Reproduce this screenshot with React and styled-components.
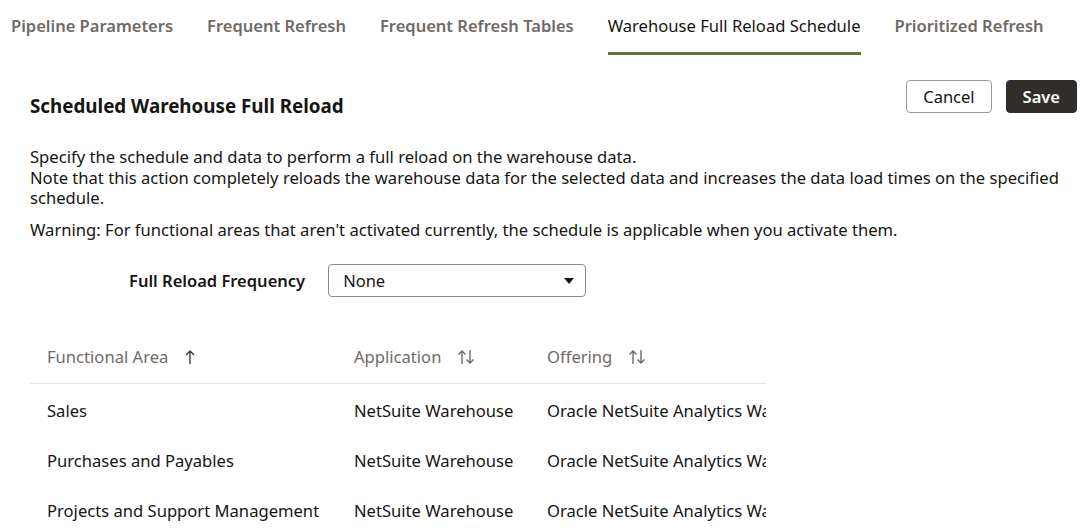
import React from "react";
import styled, { createGlobalStyle } from "styled-components";

const Global = createGlobalStyle`
  html, body { margin: 0; padding: 0; background: #fff; }
  body { font-family: "Noto Sans", "Open Sans", sans-serif; color: #161513; }
  * { box-sizing: border-box; }
`;

const Page = styled.div`
  width: 1083px;
  height: 531px;
  overflow: hidden;
  background: #fff;
`;

const TabBar = styled.div`
  display: flex;
  gap: 34px;
  padding-left: 11px;
  height: 55px;
`;

const Tab = styled.div`
  font-size: ${p => (p.$active ? 16.6 : 16.5)}px;
  font-weight: ${p => (p.$active ? 400 : 600)};
  color: ${p => (p.$active ? "#161513" : "#6f6a66")};
  padding-top: 14px;
  height: 55px;
  border-bottom: 3px solid ${p => (p.$active ? "#5b7443" : "transparent")};
  white-space: nowrap;
`;

const Content = styled.div`
  padding: 0 6px 0 30px;
`;

const HeaderRow = styled.div`
  display: flex;
  justify-content: space-between;
  align-items: flex-start;
  margin-top: 25px;
`;

const Title = styled.h2`
  margin: 13px 0 0;
  font-size: 18.8px;
  font-weight: 700;
  color: #161513;
`;

const Actions = styled.div`
  display: flex;
  gap: 14px;
`;

const Button = styled.button`
  font-family: inherit;
  font-size: 16.5px;
  height: 33px;
  padding: 0 16px;
  border-radius: 4px;
  border: 1px solid ${p => (p.$primary ? "#312d2a" : "#9e9892")};
  background: ${p => (p.$primary ? "#312d2a" : "#fff")};
  color: ${p => (p.$primary ? "#fff" : "#161513")};
  font-weight: ${p => (p.$primary ? 600 : 400)};
`;

const Para = styled.p`
  margin: ${p => p.$mt || 0}px 0 0;
  font-size: 16.6px;
  line-height: 20.5px;
  color: #161513;
`;

const FieldRow = styled.div`
  display: flex;
  align-items: center;
  margin-top: 24px;
  padding-left: 99px;
  gap: 23px;
`;

const Label = styled.label`
  font-size: 16.5px;
  font-weight: 600;
  color: #161513;
`;

const Select = styled.div`
  width: 258px;
  height: 33px;
  border: 1px solid #8f8a85;
  border-radius: 4px;
  display: flex;
  align-items: center;
  justify-content: space-between;
  padding: 0 10px 0 14px;
  font-size: 16.5px;
`;

const Table = styled.div`
  margin-top: 33px;
  width: 736px;
  overflow: hidden;
`;

const Grid = styled.div`
  display: grid;
  grid-template-columns: 307px 193px 300px;
  align-items: center;
  height: ${p => (p.$head ? 54 : 50)}px;
  border-bottom: ${p => (p.$head ? "1px solid #e4e2e0" : "none")};
  white-space: nowrap;
`;

const Body = styled.div`
  padding-top: 1px;
`;

const HeadCell = styled.div`
  padding-left: 17px;
  font-size: 16.6px;
  color: #6f6a66;
  display: flex;
  align-items: center;
  gap: 16px;
`;

const Cell = styled.div`
  padding-left: 17px;
  font-size: 16.6px;
  color: #161513;
`;

const Caret = () => (
  <svg width="12" height="8" viewBox="0 0 12 8"><path d="M1 1h10L6 7z" fill="#161513" /></svg>
);

const Up = () => (
  <svg width="12" height="16" viewBox="0 0 12 16" fill="none" stroke="#3d3935" strokeWidth="1.4">
    <path d="M6 15V2M2 6l4-4 4 4" />
  </svg>
);

const Both = () => (
  <svg width="18" height="16" viewBox="0 0 18 16" fill="none" stroke="#6f6a66" strokeWidth="1.4">
    <path d="M5 15V2M1.5 5.5L5 2l3.5 3.5M13 1v13M9.5 10.5L13 14l3.5-3.5" />
  </svg>
);

const rows = ["Sales", "Purchases and Payables", "Projects and Support Management"];

export default function App() {
  return (
    <Page>
      <Global />
      <TabBar>
        <Tab>Pipeline Parameters</Tab>
        <Tab>Frequent Refresh</Tab>
        <Tab>Frequent Refresh Tables</Tab>
        <Tab $active>Warehouse Full Reload Schedule</Tab>
        <Tab>Prioritized Refresh</Tab>
      </TabBar>
      <Content>
        <HeaderRow>
          <Title>Scheduled Warehouse Full Reload</Title>
          <Actions>
            <Button>Cancel</Button>
            <Button $primary>Save</Button>
          </Actions>
        </HeaderRow>
        <Para $mt={28}>
          Specify the schedule and data to perform a full reload on the warehouse data.
          <br />
          Note that this action completely reloads the warehouse data for the selected data and increases the data load times on the specified schedule.
        </Para>
        <Para $mt={11}>
          Warning: For functional areas that aren't activated currently, the schedule is applicable when you activate them.
        </Para>
        <FieldRow>
          <Label>Full Reload Frequency</Label>
          <Select>
            None
            <Caret />
          </Select>
        </FieldRow>
        <Table>
          <Grid $head>
            <HeadCell>Functional Area <Up /></HeadCell>
            <HeadCell>Application <Both /></HeadCell>
            <HeadCell>Offering <Both /></HeadCell>
          </Grid>
          <Body>
            {rows.map(r => (
              <Grid key={r}>
                <Cell>{r}</Cell>
                <Cell>NetSuite Warehouse</Cell>
                <Cell>Oracle NetSuite Analytics Warehouse</Cell>
              </Grid>
            ))}
          </Body>
        </Table>
      </Content>
    </Page>
  );
}
